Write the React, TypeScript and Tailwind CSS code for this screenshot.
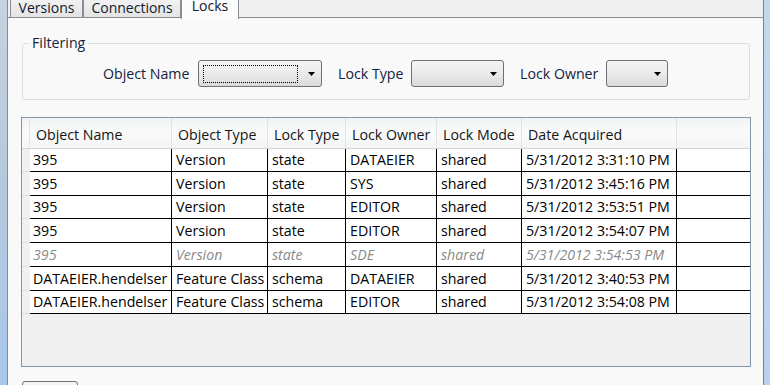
import React from "react";

const cols = [
  { name: "Object Name", w: "w-[142px]" },
  { name: "Object Type", w: "w-[96px]" },
  { name: "Lock Type", w: "w-[78px]" },
  { name: "Lock Owner", w: "w-[91px]" },
  { name: "Lock Mode", w: "w-[85px]" },
  { name: "Date Acquired", w: "w-[155px]" },
];

const rows: { cells: string[]; h: string; dim?: boolean }[] = [
  { cells: ["395", "Version", "state", "DATAEIER", "shared", "5/31/2012 3:31:10 PM"], h: "h-[23px]" },
  { cells: ["395", "Version", "state", "SYS", "shared", "5/31/2012 3:45:16 PM"], h: "h-[24px]" },
  { cells: ["395", "Version", "state", "EDITOR", "shared", "5/31/2012 3:53:51 PM"], h: "h-[23px]" },
  { cells: ["395", "Version", "state", "EDITOR", "shared", "5/31/2012 3:54:07 PM"], h: "h-[24px]" },
  { cells: ["395", "Version", "state", "SDE", "shared", "5/31/2012 3:54:53 PM"], h: "h-[24px]", dim: true },
  { cells: ["DATAEIER.hendelser", "Feature Class", "schema", "DATAEIER", "shared", "5/31/2012 3:40:53 PM"], h: "h-[24px]" },
  { cells: ["DATAEIER.hendelser", "Feature Class", "schema", "EDITOR", "shared", "5/31/2012 3:54:08 PM"], h: "h-[23px]" },
];

function Arrow() {
  return (
    <svg width="7" height="4" viewBox="0 0 7 4" className="block">
      <polygon points="0,0 7,0 3.5,4" fill="#000" />
    </svg>
  );
}

function Combo({ w, focus }: { w: string; focus?: boolean }) {
  return (
    <div
      className={`${w} h-[27px] shrink-0 rounded-[3px] border border-[#707070] bg-linear-to-b from-[#f4f4f4] via-[#ebebeb] to-[#d9d9d9] flex items-center`}
    >
      {focus ? (
        <div className="ml-[4px] w-[95px] h-[18px] border border-dotted border-black" />
      ) : null}
      <div className="flex-1 flex justify-end pr-[6px]">
        <Arrow />
      </div>
    </div>
  );
}

export default function App() {
  return (
    <div
      className="w-[770px] h-[385px] overflow-hidden flex text-[14.2px]"
      style={{ fontFamily: '"Open Sans", "Noto Sans", sans-serif' }}
    >
      {/* left window edge */}
      <div className="w-[8px] h-full border-r border-[#8a8c90] bg-linear-to-b from-[#c6d3e0] via-[#b4c8dd] to-[#a9c7ea]" />

      {/* main */}
      <div className="w-[755px] h-full flex flex-col bg-[#f0f0f0]">
        {/* tab strip */}
        <div className="h-[17px] flex items-start pl-[2px] shrink-0 text-[14px]">
          <div className="w-[73px] -mt-[3px] h-[20px] pt-[3px] leading-[14px] text-center border-x border-t border-[#898c95] bg-linear-to-b from-[#f3f3f3] to-[#e4e4e4] text-[#111a2c]">
            Versions
          </div>
          <div className="w-[98px] -mt-[3px] h-[20px] pt-[3px] leading-[14px] text-center border-x border-t border-[#898c95] bg-linear-to-b from-[#f3f3f3] to-[#e4e4e4] text-[#111a2c]">
            Connections
          </div>
          <div className="relative z-10 w-[58px] -mt-[3px] h-[22px] pt-[3px] leading-[10px] text-center border-x border-t border-[#898c95] bg-[#fbfbfb] text-[#111a2c]">
            Locks
          </div>
        </div>

        {/* panel */}
        <div className="flex-1 flex flex-col border-t border-[#898c95] bg-[#f9f9f9] overflow-hidden">
          <fieldset className="mt-[17px] ml-[14px] mr-[13px] border border-[#d5dfe5] rounded-[3px] shrink-0">
            <legend className="ml-[6px] px-[3px] leading-[16px] text-[#15223d]">Filtering</legend>
            <div className="flex items-center pt-[9px] pb-[12px] pl-[80px] text-[#15223d] whitespace-nowrap">
              <span className="w-[95px] shrink-0">Object Name</span>
              <Combo w="w-[124px]" focus />
              <span className="ml-[16px] w-[73px] shrink-0">Lock Type</span>
              <Combo w="w-[93px]" />
              <span className="ml-[16px] w-[86px] shrink-0">Lock Owner</span>
              <Combo w="w-[62px]" />
            </div>
          </fieldset>

          {/* grid */}
          <div className="mt-[17px] ml-[13px] mr-[12px] h-[250px] shrink-0 border border-[#8296ad] bg-[#f0f0f0] flex flex-col">
            <div className="h-[31px] flex border-b border-[#d5d5d5] bg-linear-to-b from-[#f2f3f5] via-[#fafafa] to-[#f4f5f6] text-[#141414]">
              <div className="w-[8px] border-r border-[#e2e2e2]" />
              {cols.map((c) => (
                <div
                  key={c.name}
                  className={`${c.w} border-r border-[#e2e3e5] flex items-center pt-[4px] pl-[6px] whitespace-nowrap`}
                >
                  {c.name}
                </div>
              ))}
              <div className="flex-1" />
            </div>
            {rows.map((r, i) => (
              <div key={i} className={`${r.h} flex`}>
                <div className="w-[8px] border-b border-[#dcdcdc] bg-[#f0f0f0]" />
                {r.cells.map((t, j) => (
                  <div
                    key={j}
                    className={`${cols[j].w} bg-white border-r border-b border-black flex items-center ${
                      j === 0 ? "pl-[3px]" : "pl-[4px]"
                    } whitespace-nowrap overflow-hidden ${
                      r.dim ? "italic text-[#8a8a8a]" : "text-black"
                    }`}
                  >
                    {t}
                  </div>
                ))}
                <div className="flex-1 bg-white border-b border-black" />
              </div>
            ))}
            <div className="flex-1" />
          </div>

          <div className="mt-[14px] ml-[14px] w-[56px] h-[20px] shrink-0 rounded-t-[3px] border border-[#707070] bg-linear-to-b from-[#f4f4f4] to-[#e6e6e6]" />
        </div>
      </div>

      {/* right window edge */}
      <div className="w-[7px] h-full border-l border-[#7d8085] bg-linear-to-b from-[#c3d9f0] to-[#b8d2ee]" />
    </div>
  );
}
